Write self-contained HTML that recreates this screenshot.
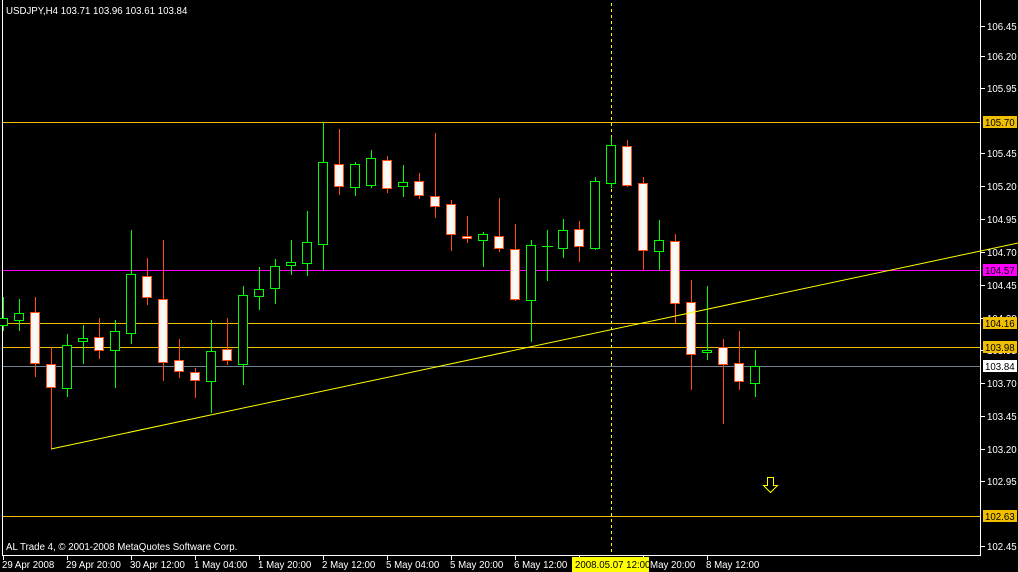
<!DOCTYPE html>
<html><head><meta charset="utf-8"><style>
html,body{margin:0;padding:0;background:#000;width:1018px;height:572px;overflow:hidden}
svg{display:block}
text{font-family:"Liberation Sans",sans-serif;font-size:9.7px;fill:#fff}
.r line{stroke:#ff4a10}.r rect{stroke:#ff4a10;fill:#f8f8f8}
.g line{stroke:#00ff00}.g rect{stroke:#00ff00;fill:#000}
</style></head><body>
<svg width="1018" height="572" viewBox="0 0 1018 572" xmlns="http://www.w3.org/2000/svg" shape-rendering="crispEdges">
<rect width="1018" height="572" fill="#000"/>
<path d="M2.5 0V555.5H980.5V0" fill="none" stroke="#fff"/>
<line x1="3" x2="980" y1="122.5" y2="122.5" stroke="#f0c000"/>
<line x1="3" x2="980" y1="270.5" y2="270.5" stroke="#ff00ff"/>
<line x1="3" x2="980" y1="323.5" y2="323.5" stroke="#f0c000"/>
<line x1="3" x2="980" y1="347.5" y2="347.5" stroke="#f0c000"/>
<line x1="3" x2="980" y1="366.5" y2="366.5" stroke="#708090"/>
<line x1="3" x2="980" y1="516.5" y2="516.5" stroke="#f0c000"/>
<line x1="611.5" x2="611.5" y1="3" y2="555" stroke="#ffff00" stroke-dasharray="3,3"/>
<g class="g"><line x1="3.5" x2="3.5" y1="297" y2="331"/><rect x="-1.5" y="318.5" width="9" height="7"/></g>
<g class="g"><line x1="19.5" x2="19.5" y1="299" y2="331"/><rect x="14.5" y="313.5" width="9" height="7"/></g>
<g class="r"><line x1="35.5" x2="35.5" y1="297" y2="377"/><rect x="30.5" y="312.5" width="9" height="51"/></g>
<g class="r"><line x1="51.5" x2="51.5" y1="347" y2="449"/><rect x="46.5" y="364.5" width="9" height="23"/></g>
<g class="g"><line x1="67.5" x2="67.5" y1="334" y2="397"/><rect x="62.5" y="345.5" width="9" height="43"/></g>
<g class="g"><line x1="83.5" x2="83.5" y1="325" y2="364"/><rect x="78.5" y="338.5" width="9" height="3"/></g>
<g class="r"><line x1="99.5" x2="99.5" y1="318" y2="359"/><rect x="94.5" y="337.5" width="9" height="13"/></g>
<g class="g"><line x1="115.5" x2="115.5" y1="320" y2="388"/><rect x="110.5" y="331.5" width="9" height="19"/></g>
<g class="g"><line x1="131.5" x2="131.5" y1="230" y2="344"/><rect x="126.5" y="274.5" width="9" height="59"/></g>
<g class="r"><line x1="147.5" x2="147.5" y1="258" y2="305"/><rect x="142.5" y="276.5" width="9" height="21"/></g>
<g class="r"><line x1="163.5" x2="163.5" y1="240" y2="381"/><rect x="158.5" y="299.5" width="9" height="63"/></g>
<g class="r"><line x1="179.5" x2="179.5" y1="339" y2="378"/><rect x="174.5" y="360.5" width="9" height="11"/></g>
<g class="r"><line x1="195.5" x2="195.5" y1="368" y2="398"/><rect x="190.5" y="372.5" width="9" height="8"/></g>
<g class="g"><line x1="211.5" x2="211.5" y1="320" y2="413"/><rect x="206.5" y="351.5" width="9" height="30"/></g>
<g class="r"><line x1="227.5" x2="227.5" y1="318" y2="365"/><rect x="222.5" y="349.5" width="9" height="11"/></g>
<g class="g"><line x1="243.5" x2="243.5" y1="286" y2="385"/><rect x="238.5" y="295.5" width="9" height="69"/></g>
<g class="g"><line x1="259.5" x2="259.5" y1="267" y2="310"/><rect x="254.5" y="289.5" width="9" height="7"/></g>
<g class="g"><line x1="275.5" x2="275.5" y1="259" y2="304"/><rect x="270.5" y="266.5" width="9" height="22"/></g>
<g class="g"><line x1="291.5" x2="291.5" y1="240" y2="275"/><rect x="286.5" y="262.5" width="9" height="3"/></g>
<g class="g"><line x1="307.5" x2="307.5" y1="211" y2="276"/><rect x="302.5" y="242.5" width="9" height="21"/></g>
<g class="g"><line x1="323.5" x2="323.5" y1="122" y2="270"/><rect x="318.5" y="162.5" width="9" height="82"/></g>
<g class="r"><line x1="339.5" x2="339.5" y1="129" y2="195"/><rect x="334.5" y="164.5" width="9" height="22"/></g>
<g class="g"><line x1="355.5" x2="355.5" y1="162" y2="196"/><rect x="350.5" y="164.5" width="9" height="23"/></g>
<g class="g"><line x1="371.5" x2="371.5" y1="150" y2="188"/><rect x="366.5" y="158.5" width="9" height="27"/></g>
<g class="r"><line x1="387.5" x2="387.5" y1="156" y2="193"/><rect x="382.5" y="160.5" width="9" height="28"/></g>
<g class="g"><line x1="403.5" x2="403.5" y1="165" y2="197"/><rect x="398.5" y="182.5" width="9" height="4"/></g>
<g class="r"><line x1="419.5" x2="419.5" y1="173" y2="199"/><rect x="414.5" y="181.5" width="9" height="14"/></g>
<g class="r"><line x1="435.5" x2="435.5" y1="133" y2="218"/><rect x="430.5" y="196.5" width="9" height="10"/></g>
<g class="r"><line x1="451.5" x2="451.5" y1="200" y2="251"/><rect x="446.5" y="204.5" width="9" height="30"/></g>
<g class="r"><line x1="467.5" x2="467.5" y1="216" y2="243"/><rect x="462.5" y="236.5" width="9" height="2"/></g>
<g class="g"><line x1="483.5" x2="483.5" y1="232" y2="267"/><rect x="478.5" y="234.5" width="9" height="6"/></g>
<g class="r"><line x1="499.5" x2="499.5" y1="198" y2="252"/><rect x="494.5" y="236.5" width="9" height="12"/></g>
<g class="r"><line x1="515.5" x2="515.5" y1="224" y2="301"/><rect x="510.5" y="249.5" width="9" height="50"/></g>
<g class="g"><line x1="531.5" x2="531.5" y1="240" y2="342"/><rect x="526.5" y="245.5" width="9" height="55"/></g>
<g class="g"><line x1="547.5" x2="547.5" y1="230" y2="281"/><line x1="542" x2="553" y1="246.5" y2="246.5"/></g>
<g class="g"><line x1="563.5" x2="563.5" y1="219" y2="258"/><rect x="558.5" y="230.5" width="9" height="18"/></g>
<g class="r"><line x1="579.5" x2="579.5" y1="221" y2="262"/><rect x="574.5" y="229.5" width="9" height="17"/></g>
<g class="g"><line x1="595.5" x2="595.5" y1="177" y2="250"/><rect x="590.5" y="181.5" width="9" height="67"/></g>
<g class="g"><line x1="611.5" x2="611.5" y1="137" y2="188"/><rect x="606.5" y="145.5" width="9" height="38"/></g>
<g class="r"><line x1="627.5" x2="627.5" y1="140" y2="187"/><rect x="622.5" y="146.5" width="9" height="39"/></g>
<g class="r"><line x1="643.5" x2="643.5" y1="177" y2="270"/><rect x="638.5" y="183.5" width="9" height="67"/></g>
<g class="g"><line x1="659.5" x2="659.5" y1="220" y2="270"/><rect x="654.5" y="240.5" width="9" height="11"/></g>
<g class="r"><line x1="675.5" x2="675.5" y1="234" y2="323"/><rect x="670.5" y="241.5" width="9" height="62"/></g>
<g class="r"><line x1="691.5" x2="691.5" y1="280" y2="390"/><rect x="686.5" y="302.5" width="9" height="52"/></g>
<g class="g"><line x1="707.5" x2="707.5" y1="286" y2="360"/><rect x="702.5" y="350.5" width="9" height="2"/></g>
<g class="r"><line x1="723.5" x2="723.5" y1="339" y2="424"/><rect x="718.5" y="347.5" width="9" height="17"/></g>
<g class="r"><line x1="739.5" x2="739.5" y1="331" y2="390"/><rect x="734.5" y="363.5" width="9" height="18"/></g>
<g class="g"><line x1="755.5" x2="755.5" y1="350" y2="397"/><rect x="750.5" y="366.5" width="9" height="17"/></g>
<line x1="51" y1="449" x2="1018" y2="243" stroke="#ffff00" shape-rendering="auto"/>
<path d="M767.5 477.5h6v8h4l-7 7-7-7h4z" fill="none" stroke="#ffff00" shape-rendering="auto"/>
<text x="6" y="14">USDJPY,H4  103.71 103.96 103.61 103.84</text>
<text x="6" y="550">AL Trade 4, © 2001-2008 MetaQuotes Software Corp.</text>
<g stroke="#fff">
<line x1="981" x2="985" y1="26.5" y2="26.5"/><line x1="981" x2="985" y1="56.5" y2="56.5"/><line x1="981" x2="985" y1="88.5" y2="88.5"/>
<line x1="981" x2="985" y1="153.5" y2="153.5"/><line x1="981" x2="985" y1="186.5" y2="186.5"/><line x1="981" x2="985" y1="219.5" y2="219.5"/>
<line x1="981" x2="985" y1="252.5" y2="252.5"/><line x1="981" x2="985" y1="285.5" y2="285.5"/><line x1="981" x2="985" y1="318.5" y2="318.5"/>
<line x1="981" x2="985" y1="350.5" y2="350.5"/><line x1="981" x2="985" y1="383.5" y2="383.5"/><line x1="981" x2="985" y1="416.5" y2="416.5"/>
<line x1="981" x2="985" y1="449.5" y2="449.5"/><line x1="981" x2="985" y1="481.5" y2="481.5"/><line x1="981" x2="985" y1="546.5" y2="546.5"/>
</g>
<text x="987" y="30">106.45</text><text x="987" y="60">106.20</text><text x="987" y="92">105.95</text>
<text x="987" y="157">105.45</text><text x="987" y="190">105.20</text><text x="987" y="223">104.95</text>
<text x="987" y="256">104.70</text><text x="987" y="289">104.45</text><text x="987" y="322">104.20</text>
<text x="987" y="354">103.95</text><text x="987" y="387">103.70</text><text x="987" y="420">103.45</text>
<text x="987" y="453">103.20</text><text x="987" y="485">102.95</text><text x="987" y="550">102.45</text>
<rect x="983" y="116" width="34" height="12" fill="#f0c000"/><text x="985" y="126" style="fill:#000">105.70</text>
<rect x="983" y="264" width="34" height="12" fill="#ff00ff"/><text x="985" y="274" style="fill:#000">104.57</text>
<rect x="983" y="317" width="34" height="12" fill="#f0c000"/><text x="985" y="327" style="fill:#000">104.16</text>
<rect x="983" y="341" width="34" height="12" fill="#f0c000"/><text x="985" y="351" style="fill:#000">103.98</text>
<rect x="983" y="360" width="34" height="12" fill="#fff"/><text x="985" y="370" style="fill:#000">103.84</text>
<rect x="983" y="510" width="34" height="12" fill="#f0c000"/><text x="985" y="520" style="fill:#000">102.63</text>
<g stroke="#fff">
<line x1="3.5" x2="3.5" y1="556" y2="560"/><line x1="67.5" x2="67.5" y1="556" y2="560"/><line x1="131.5" x2="131.5" y1="556" y2="560"/>
<line x1="195.5" x2="195.5" y1="556" y2="560"/><line x1="259.5" x2="259.5" y1="556" y2="560"/><line x1="323.5" x2="323.5" y1="556" y2="560"/>
<line x1="387.5" x2="387.5" y1="556" y2="560"/><line x1="451.5" x2="451.5" y1="556" y2="560"/><line x1="515.5" x2="515.5" y1="556" y2="560"/>
<line x1="579.5" x2="579.5" y1="556" y2="560"/><line x1="643.5" x2="643.5" y1="556" y2="560"/><line x1="707.5" x2="707.5" y1="556" y2="560"/>
</g>
<text x="2" y="568">29 Apr 2008</text><text x="66" y="568">29 Apr 20:00</text><text x="130" y="568">30 Apr 12:00</text>
<text x="194" y="568">1 May 04:00</text><text x="258" y="568">1 May 20:00</text><text x="322" y="568">2 May 12:00</text>
<text x="386" y="568">5 May 04:00</text><text x="450" y="568">5 May 20:00</text><text x="514" y="568">6 May 12:00</text>
<text x="650" y="568">May 20:00</text><text x="706" y="568">8 May 12:00</text>
<rect x="572" y="557" width="77" height="15" fill="#ffff00"/><text x="575" y="568" style="fill:#000">2008.05.07 12:00</text>
</svg>
</body></html>
